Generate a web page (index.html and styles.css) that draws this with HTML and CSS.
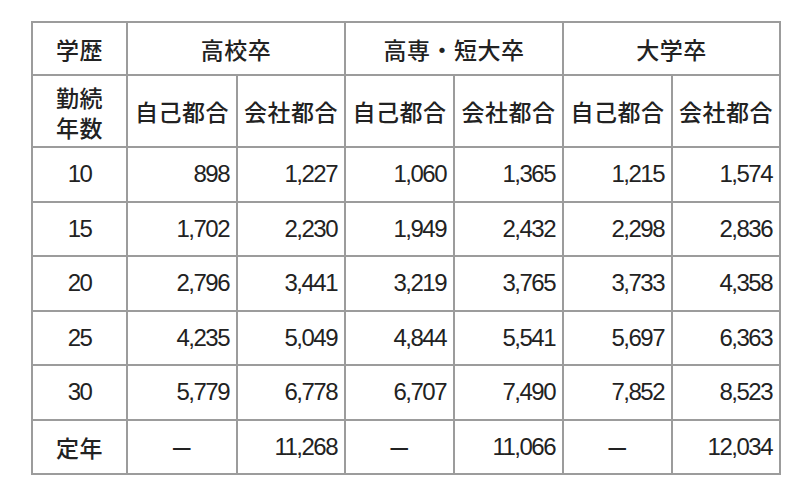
FILE: index.html
```html
<!DOCTYPE html>
<html lang="ja">
<head>
<meta charset="utf-8">
<link rel="stylesheet" href="styles.css">
</head>
<body>
<table class="tbl">
  <colgroup>
    <col class="c0"><col class="c1"><col class="c2"><col class="c3"><col class="c4"><col class="c5"><col class="c6">
  </colgroup>
  <tr class="h1">
    <td class="jp">学歴</td>
    <td class="jp" colspan="2">高校卒</td>
    <td class="jp" colspan="2">高専・短大卒</td>
    <td class="jp" colspan="2">大学卒</td>
  </tr>
  <tr class="h2">
    <td class="jp two"><div>勤続</div><div>年数</div></td>
    <td class="jp">自己都合</td>
    <td class="jp">会社都合</td>
    <td class="jp">自己都合</td>
    <td class="jp">会社都合</td>
    <td class="jp">自己都合</td>
    <td class="jp">会社都合</td>
  </tr>
  <tr class="r">
    <td class="yr">10</td><td class="num">898</td><td class="num">1,227</td><td class="num">1,060</td><td class="num">1,365</td><td class="num">1,215</td><td class="num">1,574</td>
  </tr>
  <tr class="r">
    <td class="yr">15</td><td class="num">1,702</td><td class="num">2,230</td><td class="num">1,949</td><td class="num">2,432</td><td class="num">2,298</td><td class="num">2,836</td>
  </tr>
  <tr class="r">
    <td class="yr">20</td><td class="num">2,796</td><td class="num">3,441</td><td class="num">3,219</td><td class="num">3,765</td><td class="num">3,733</td><td class="num">4,358</td>
  </tr>
  <tr class="r">
    <td class="yr">25</td><td class="num">4,235</td><td class="num">5,049</td><td class="num">4,844</td><td class="num">5,541</td><td class="num">5,697</td><td class="num">6,363</td>
  </tr>
  <tr class="r">
    <td class="yr">30</td><td class="num">5,779</td><td class="num">6,778</td><td class="num">6,707</td><td class="num">7,490</td><td class="num">7,852</td><td class="num">8,523</td>
  </tr>
  <tr class="r">
    <td class="jp">定年</td><td class="jp dash">ー</td><td class="num">11,268</td><td class="jp dash">ー</td><td class="num">11,066</td><td class="jp dash">ー</td><td class="num">12,034</td>
  </tr>
</table>
</body>
</html>
```

FILE: styles.css
```css
html, body {
  margin: 0;
  padding: 0;
  background: #ffffff;
}
body {
  padding: 21px 0 0 31px;
  color: #222222;
}
.tbl {
  border-collapse: collapse;
  table-layout: fixed;
  width: 748px;
}
.c0 { width: 95px; }
.c1 { width: 110px; }
.c2 { width: 108px; }
.c3 { width: 109px; }
.c4 { width: 109px; }
.c5 { width: 109px; }
.c6 { width: 108px; }
.tbl td {
  border: 2px solid #9c9c9c;
  padding: 0;
  text-align: center;
  vertical-align: middle;
  white-space: nowrap;
  overflow: hidden;
}
.h1 { height: 53px; }
.h2 { height: 72px; }
.r { height: 54.5px; }
.jp {
  font-family: "Noto Sans CJK JP", sans-serif;
  font-size: 23px;
  font-weight: 500;
  letter-spacing: 0.5px;
}
.tbl td.two {
  line-height: 30px;
  padding-top: 2px;
}
.yr, .num {
  font-family: "Liberation Sans", Arial, sans-serif;
  font-size: 24px;
  letter-spacing: -1.5px;
}
.tbl td.num {
  text-align: right;
  padding-right: 7px;
}
.tbl td.dash {
  font-size: 22px;
  font-weight: 400;
}
```
